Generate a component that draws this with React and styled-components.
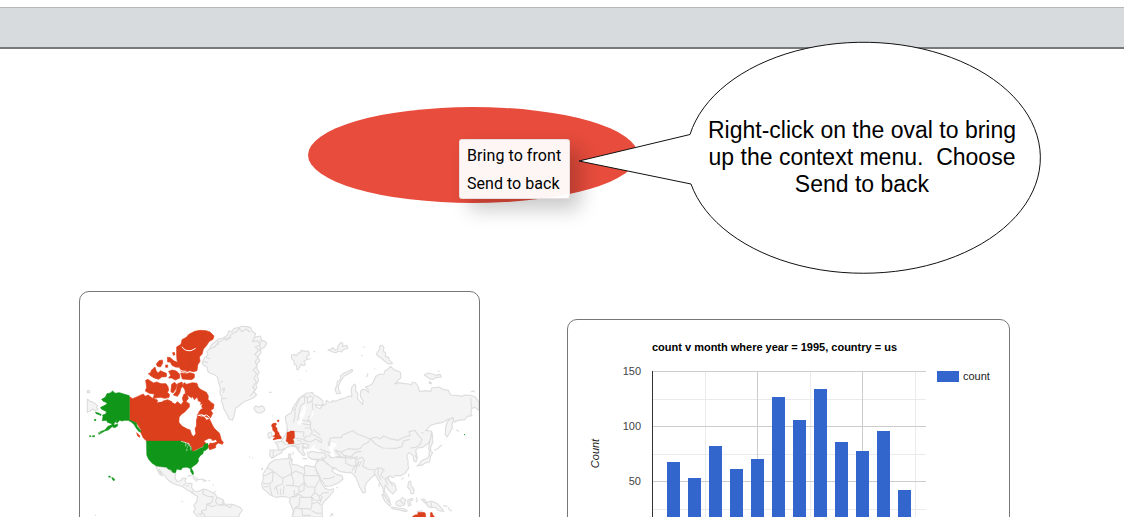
import React from 'react';
import styled, { createGlobalStyle } from 'styled-components';

const GlobalStyle = createGlobalStyle`
  body { margin: 0; background: #fff; overflow: hidden; }
  * { box-sizing: border-box; }
`;

const Page = styled.main`
  position: relative;
  width: 1124px;
  height: 517px;
  overflow: hidden;
  padding-top: 7px;
  font-family: "Liberation Sans", Arial, sans-serif;
`;

const Toolbar = styled.header`
  height: 42px;
  background: #d7dbde;
  border-top: 1px solid #b4b8ba;
  border-bottom: 2px solid #77797b;
`;

const Cards = styled.section`
  display: flex;
  align-items: flex-start;
  gap: 87px;
  padding: 242px 0 0 79px;
`;

const Card = styled.article`
  flex: none;
  width: ${p => p.$width}px;
  height: 320px;
  margin-top: ${p => p.$drop || 0}px;
  border: 1px solid #777;
  border-radius: 10px;
  overflow: hidden;
  background: #fff;
`;

const Drawing = styled.svg`
  display: block;
`;

const Oval = styled.div`
  position: absolute;
  left: 308px;
  top: 107px;
  width: 330px;
  height: 96px;
  border-radius: 50%;
  background: #e74c3c;
`;

const Menu = styled.ul`
  position: absolute;
  left: 459px;
  top: 139px;
  width: 111px;
  height: 60px;
  margin: 0;
  padding: 2px 0 0 7px;
  list-style: none;
  background: rgba(255, 255, 255, 0.95);
  border: 1px solid rgba(225, 215, 215, 0.8);
  border-radius: 3px;
  box-shadow: 10px 10px 20px rgba(0, 0, 0, 0.22);
`;

const MenuItem = styled.li`
  height: 28px;
  font: 16px/28px Roboto, sans-serif;
  letter-spacing: ${p => p.$tracking}px;
  white-space: nowrap;
  color: #000;
`;

const Callout = styled.div`
  position: absolute;
  left: 570px;
  top: 35px;
  width: 480px;
  height: 245px;
`;

const CalloutText = styled.p`
  position: absolute;
  left: 121px;
  top: 82px;
  width: 342px;
  margin: 0;
  font-size: 23px;
  line-height: 27px;
  text-align: center;
  white-space: pre;
  color: #000;
`;

const Land = styled.path`
  fill: ${p => p.$fill || '#f4f4f4'};
  stroke: ${p => p.$edge || '#dddddd'};
  stroke-width: ${p => p.$weight || 3.4};
  stroke-linejoin: round;
`;

const Border = styled.path`
  fill: none;
  stroke: #dddddd;
  stroke-width: 3.4;
  stroke-linejoin: round;
`;

const Water = styled.path`
  fill: #fff;
  stroke: #fff;
  stroke-width: 1;
`;

const Channel = styled.path`
  fill: none;
  stroke: #fff;
  stroke-width: 3;
`;

const RED = '#dc3f1b';
const GREEN = '#109618';

function Americas() {
  return (
    <g>
      <g transform="translate(0 120)">
        {/* Chukotka tip and Greenland */}
        <Land d="M22 222L30 229 38 231 45 236 53 242 49 248 55 253 46 257 38 252 30 258 22 262ZM22 197H29V203H22Z" />
        <Land d="M366 113L374 98 384 90 381 80 389 71 394 60 405 51 416 42 430 39 443 30 445 18 456 20 462 10 476 8 484 4 501 5 512 8 516 19 527 26 523 37 541 33 545 45 560 54 551 65 541 73 543 84 534 95 539 108 529 119 532 134 538 141 532 154 536 166 528 178 530 189 521 201 530 209 520 219 503 226 489 232 480 240 467 249 464 263 461 277 457 286 447 281 438 262 431 251 429 239 424 228 426 216 420 206 421 186 416 175 413 157 404 149 389 144 383 138 382 127 369 119Z" />
        <Border d="M390 72L405 65 412 55 422 49 430 43 445 39 455 27 470 20 478 10 486 20 499 12 510 21M397 67L408 64M413 48L415 60M431 38L438 46 455 36M524 37L517 50 532 47 541 60 525 66 537 75 524 88 535 98 525 110 532 122 519 136 530 145 522 160 529 171 518 186 526 195 510 214M370 110L384 112M378 97L390 102M421 173L429 168M424 195L434 189 430 204M427 222L439 219" />
      </g>
      <Land d="M522 369L527 362 535 367 545 362 552 367 554 376 546 383 534 384 526 378Z" />
      {/* Mexico, Caribbean and South America */}
      <Land d="M226 541L242 545 261 548 272 559 282 561 287 566 285 580 292 590 303 586 308 579 319 580 314 588 319 594 336 596 335 607 342 618 358 619 371 612 380 614 404 626 411 636 430 645 433 657 458 658 480 667 487 675 479 687 475 696 353 696 340 681 346 671 341 662 350 650 353 634 341 628 334 621 322 616 308 605 292 600 278 595 264 585 252 570 237 553 239 560 247 572 238 567Z" />
      <Border d="M317 596L309 602M319 604L326 600M341 619L334 625M371 615L368 627 383 634 399 635 397 650 388 658M411 636L406 650 416 660 431 657M430 645L428 657M458 659L449 668 438 660 418 661M397 652L380 658 379 674 364 678 365 688 353 687M380 658L396 665 410 660M364 678L378 696" />
      <Border d="M323 574L333 571 343 575 355 584 346 585 338 578M356 584L367 582 379 588 367 588M386 587H390M398 600H402M400 623L407 619M347 589H351M305 649H309M45 691H48M507 515L511 517 M517 518L519 520M544 537H546M544 553L549 554" />

      <g transform="translate(0 120)">
        {/* Canada mainland */}
        <Land $fill={RED} $edge={RED} $weight={2} d="M149 216L158 221 172 215 185 209 190 207 195 214 205 210 215 218 232 225 233 231 247 229 263 224 279 232 285 238 292 230 303 239 310 230 307 220 312 207 320 207 325 220 318 230 328 236 328 246 312 263 300 277 298 293 307 303 318 307 329 312 335 329 342 335 344 320 342 309 348 300 347 287 352 278 352 267 364 271 374 278 380 286 388 281 396 298 402 309 412 319 418 324 421 334 424 345 430 352 427 358 415 354 407 360 407 368 389 374 384 363 391 354 397 343 387 340 371 348 378 355 370 363 354 371 337 380 334 369 328 354 315 351 302 348 200 348 190 339 182 322 183 314 170 294 149 286Z" />
        {/* Baffin island */}
        <Land $fill={RED} $edge={RED} $weight={2} d="M312 173L320 178 337 173 351 175 354 186 360 192 371 198 379 202 385 213 384 223 394 233 402 238 400 251 392 256 398 265 391 279 377 275 367 267 355 266 359 256 370 250 363 246 369 236 354 239 345 244 342 228 337 220 323 211 316 205 315 195 308 184Z" />
        {/* Arctic archipelago */}
        <Land $fill={RED} $edge={RED} $weight={2} d="M197 166L204 163 211 168 221 174 230 171 243 176 258 176 264 185 266 195 262 203 269 208 267 217 255 220 241 217 220 220 223 207 208 205 196 198 200 187ZM290 66L303 58 306 44 319 37 327 28 344 19 360 16 378 17 390 21 402 33 399 43 388 49 380 61 370 73 366 88 358 96 360 109 353 120 351 137 340 140 329 137 316 142 303 139 299 128 295 120 291 105 290 92ZM302 144L319 146 330 143 343 147 343 158 335 164 307 162ZM205 146L212 143 214 136 225 126 229 139 235 144 241 137 259 145 259 154 245 156 236 163 222 159 213 153ZM229 117L237 107 247 105 248 115 241 126 232 124ZM262 97L271 98 281 107 292 112 297 127 286 126 276 121 271 111 263 111ZM278 83L283 82 285 89 280 91ZM266 139L277 135 289 138 299 148 299 159 286 165 275 159 266 159 272 151ZM275 178L284 172 291 180 287 193 279 204 272 200ZM293 176L306 171 309 183 303 190 299 204 292 214 280 210 289 198ZM257 120H263V127H257ZM249 146H258V155H249ZM170 323L179 332 179 337 173 333Z" />
        <Water d="M337 216L343 226 351 218 354 229 362 232 359 240 365 246 358 257 344 261 348 277 333 279 325 271 334 261 332 244 339 240 333 230Z" />
        <Water d="M299 276L306 268 313 264 325 270 335 280 348 280 348 302 344 311 346 327 340 332 337 314 323 311 307 302 298 291Z" />
        <Water d="M384 350L391 345 399 348 407 345 410 350 396 354 390 352Z" />
        <Channel d="M306 65Q313 79 333 77L347 70M297 132L306 138 319 139M269 171L270 208M302 207L303 230M232 231L248 228M276 230L284 234M213 158L235 167 260 162M352 270L365 273 380 270 390 278" strokeWidth="2.5" />
        <path d="M322 29L334 34 342 27 352 35M372 24L366 40 374 48 365 60 370 71 361 85M327 92L335 98 329 109 341 116 331 127M336 178L348 191 357 185M206 188L221 190 232 187M184 220L193 228 202 220M234 236L245 232 255 238M362 251L376 256M375 240L387 246M377 302L393 318M401 332L409 338M346 329L354 336 366 335M340 366L352 360M170 300L183 314 190 331" fill="none" stroke="#b64523" strokeWidth="1.4" opacity=".65" />

        {/* Alaska, contiguous states, Hawaii */}
        <Land $fill={GREEN} $edge={GREEN} $weight={2} d="M65 223L76 217 81 206 91 204 98 198 105 205 118 203 134 208 148 212 148 285 158 289 169 294 171 304 180 314 183 321 176 319 167 307 163 299 154 291 145 286 134 286 125 288 119 285 114 292 108 293 111 285 103 294 99 302 86 314 74 318 62 325 61 320 75 315 84 304 95 300 96 296 82 292 80 286 67 287 69 275 68 270 77 267 80 260 64 252 62 247 69 244 80 238 81 233 70 229Z" />
        <Land $fill={GREEN} $edge={GREEN} $weight={1} d="M46 261L59 265 57 269 48 266ZM43 283H48V287H43ZM28 332H33V335H28ZM36 333L44 331 44 335 38 336ZM55 323L62 323 57 329ZM98 299L106 299 113 296 113 303 105 308 98 307ZM60 266L64 268 62 272 57 269ZM86 453H91V457H86ZM95 457L100 459 105 464 101 468 96 461Z" />
        <Land $fill={GREEN} $edge={GREEN} $weight={1} d="M199 348H303L317 353 327 359 334 366 336 379 345 378 360 370 369 366 374 356 384 355 384 370 378 376 371 378 369 386 361 392 355 401 356 408 350 417 340 424 334 429 340 440 341 448 338 449 332 440 331 431 321 427 308 428 303 435 290 433 287 443 279 443 273 435 264 432 260 427 245 425 229 423 216 415 205 402 200 390Z" />
        <path d="M303 349L318 353 317 364M323 359L333 365 332 376M322 364L320 378" fill="none" stroke="#fff" strokeWidth="1.8" />
        <path d="M318 368L325 371" stroke={GREEN} strokeWidth="3" />
      </g>
    </g>
  );
}

function OldWorld() {
  return (
    <g transform="translate(540 240)">
      {/* Arctic islands */}
      <Land d="M0-72L11-73 20-66 14-54 5-49 0-42ZM94-30L103-32 108-27 114-35 122-39 124-44 134-41 145-42 148-31 139-24 142-17 132-11 136 0 129 2 123-3 119 6 114 15 110 13 110 2 103-2 102-12 95-19ZM204-45L212-47 219-52 224-45 233-48 235-59 243-68 248-65 248-56 260-59 264-51 250-46 245-39 235-42 228-37 221-38ZM349-33L358-46 360-58 366-59 372-52 370-42 377-35 376-26 386-23 388-14 398-5 394-3 382-5 370-15 363-22 354-26ZM493 30L504 24 518 27 528 31 540 28 544 36 527 38 520 43 508 41ZM509 49L515 56 508 55Z" />
      <Border d="M142-17L151-19M160-40H166M310-54H316M303-29L307-27M321 26L324 28 319 37M344 10V13M137 18H141M119 45H122M27 82H35M534 16L538 20M632 81L641 77 642 82M36 153H39" />
      <Land d="M230 86L225 73 230 63 232 50 241 43 242 33 253 24 266 18 276 13 278 18 266 26 253 33 243 47 235 63 236 75 242 85Z" />

      {/* Eurasia */}
      <Land d="M78 172L76 156 83 149 94 143 98 130 107 116 116 101 128 92 141 84 150 84 157 82 162 90 177 97 188 107 190 117 180 122 165 118 170 127 180 131 187 122 198 117 199 106 206 111 215 112 217 107 227 109 240 103 255 99 268 93 276 95 274 79 275 67 283 57 287 61 287 77 294 87 292 100 299 108 308 118 309 107 301 94 302 79 307 73 316 74 326 83 323 71 316 66 328 62 337 56 348 34 358 28 372 27 374 18 382 14 392 4 402 14 421 21 423 38 414 47 404 57 418 53 428 55 446 57 453 60 458 51 467 54 475 66 479 80 494 77 513 79 515 69 536 66 551 74 565 76 572 90 594 92 607 94 612 90 632 91 646 96 657 112 657 137 645 127 634 131 633 147 636 152 622 154 614 164 594 166 584 172 577 160 564 163 549 172 527 176 512 181 497 197 514 198 513 218 505 235 488 247 473 249 467 258 472 277 468 291 461 287 460 274 451 265 446 263 440 273 444 285 444 300 446 309 435 325 422 332 405 332 399 338 391 333 382 337 389 349 404 356 409 375 399 387 384 373 376 359 373 379 386 399 390 410 380 404 371 388 369 370 357 348 346 329 335 337 320 353 315 364 316 382 309 384 299 366 288 338 283 331 272 322 261 323 241 320 221 307 215 317 229 328 246 332 249 342 237 353 212 363 198 364 184 345 169 316 164 305 173 285 156 283 145 276 142 261 151 257 140 252 129 244 129 259 136 269 129 271 114 256 105 241 96 242 83 247 69 253 65 263 52 270 36 280 29 272 30 255 56 255 51 239 45 232 63 229 75 211 81 201 81 177Z" />
      <Land d="M556 208L557 186 562 170 577 157 581 163 576 178 577 189 567 207 561 216ZM516 202L518 213 517 221 519 231 512 245 512 257 506 253 508 235 512 219ZM483 289L490 284 503 279 508 271 507 261 511 257 518 263 512 273 510 284 509 291 496 294 486 301 476 301Z" />
      <Border d="M523 256L533 251 545 240M588 195L597 199M469 304L480 299M476 297V304" />
      {/* Scandinavian, Baltic and Central European borders */}
      <Border d="M96 132L105 134 105 151 101 172M105 134L112 115 121 98 133 93 142 98 151 92 160 99 156 108 159 133 151 153 143 157M133 93L134 113 121 123 117 147 112 166M142 98L143 115 156 107M126 165L148 170M127 176L151 180M134 189H151M143 160L152 173 151 189 157 201 149 213 136 214 132 226 151 231 168 222 184 233 185 223 167 213 157 207M132 200L130 216M105 199L132 201M105 219L133 223M83 190V214M63 228L79 239M57 256L77 253M40 255L39 279M81 240L98 232 112 239 130 234 147 240 142 250M97 244L117 246 113 255M130 235L127 248 147 250M110 224L126 230M146 262L158 259 173 263 194 264 199 277 183 284 158 282M180 252L199 260 210 264M160 193L181 211" />
      <Land d="M24 205L34 201 36 214 28 220 24 216ZM86 268H92V279H86Z" />
      <Water d="M208 232L224 234 231 241 219 249 221 266 228 272 222 279 211 271 214 261 207 250ZM140 251L152 252 160 242 166 240 160 250 169 251 180 260 156 257 143 260ZM113 173L123 161 119 149 127 137 132 122 137 124 135 145 128 159 122 176 113 181ZM155 142L158 135 159 151 151 158Z" />
      {/* Asian borders */}
      <Border d="M209 244L210 220 224 217 244 218 248 210 278 197 291 206 310 214 330 222 327 230 310 239 300 251 287 253 265 251 242 262 226 255M332 221L349 216 360 222 371 213 389 221 415 226 433 216 451 212 447 200 465 196 473 208 486 223 479 240 468 247 450 249M332 222L347 238 369 249 407 250 426 245 430 228 449 223M225 256L245 278 268 279 286 262 304 259M241 261L252 271 278 276 290 284 306 276 313 286 308 304 324 312 343 315 354 309 366 310 374 317M229 277L257 276 273 281 294 275M257 278L257 295 275 303 292 302 297 288M202 268L214 279 240 273M185 276L202 299M169 294L180 283 195 290 224 314M189 341L210 340 224 334M288 280L287 301 276 317M295 289L289 309 285 325M305 289L296 305M345 316L342 330M355 311L354 328 363 345M370 314L362 332 376 343 384 360M376 342L387 335M382 336L398 363M206 242L205 229" />
      <Border d="M632 99L636 134M465 269L470 279M357 354L358 366M446 326V335M425 344L431 338M550 422L562 424M565 427L568 434 576 438M229 368H234M4 310H9M93 284L99 284M211 456L216 445 220 452M99 260V270M89 265L91 272M127 281H141M485 203H490" />
      <Land d="M365 388L373 391 386 410 393 418 389 423 374 408ZM393 426L414 429 430 431 442 437 437 440 416 435 397 431ZM408 412L418 406 428 398 437 405 433 420 420 424 408 419ZM446 350L452 348 453 361 462 374 461 385 453 386 450 374 443 367ZM443 405L456 400 459 404 449 409 453 420 445 423ZM484 403L493 402 500 413 513 408 531 415 546 431 551 439 535 436 526 427 508 427 496 414Z" />
      <Border d="M420 406L430 417M514 412L514 427M469 398L472 407 468 411M470 440L487 437" />

      {/* Africa */}
      <Land d="M21 308L29 295 44 285 65 282 85 281 95 281 96 298 112 300 130 309 136 301 153 304 166 306 170 321 178 339 186 357 196 371 210 375 220 371 221 378 208 394 194 408 186 422 187 456H96L100 438 93 420 88 410 91 400 80 396 66 394 48 397 32 391 20 380 8 370 5 357 10 343 9 328Z" />
      <Border d="M21 308L36 316 40 319 20 330 11 333M37 317L68 340 94 327 94 312 88 296 91 284M40 320L37 350 27 357 9 355M68 340L68 357 50 363 42 373M94 327L101 349 98 362 78 361M95 326L107 318 130 328 133 353 116 366 99 361M134 330L133 306M132 332H172M133 352L142 366 166 366 174 352 182 338M133 353L132 376 118 382 105 390 98 400M165 366L164 382 178 394 188 384 206 382M116 366L118 381M103 375L103 390M92 395L106 395 116 388 130 396 151 397 165 382M119 396L118 421 104 430 99 450M118 397H155L156 418 152 434 137 430 118 432M155 417L172 411 183 420M155 438L170 445 187 444M157 397L161 405 183 406 187 393M178 394L182 412M48 363L54 388M72 362L70 389M31 369L36 391M30 359L30 372M10 366L25 364M62 371L62 389M104 429L125 430 128 451 152 451" />
      {/* United Kingdom, Germany, northern Australia */}
      <Land $fill={RED} $edge={RED} $weight={1} d="M36 178L39 175 48 174 50 178 46 183 51 190 52 197 57 203 59 211 64 215 64 221 53 222 40 225 39 222 46 216 38 214 45 210 45 203 38 195 37 187 34 183ZM52 165H57V170H52ZM81 202L90 200 90 198 103 198 104 216 102 221 98 222 102 229 101 236 86 237 84 232 78 229 80 217ZM458 454L466 449 472 449 474 442 493 442 497 446V456H458ZM511 443L516 442 519 450 524 456H511Z" />
      <path d="M612 209h3" stroke="#109618" strokeWidth="3" />
    </g>
  );
}

function WorldMap() {
  return (
    <Drawing width="399" height="225" viewBox="0 21 1197 675">
      <Americas />
      <OldWorld />
    </Drawing>
  );
}

const barTops = [462, 478, 446, 469, 459, 397, 420, 389, 442, 451, 431, 490];

function CountChart() {
  return (
    <Drawing width="441" height="197" viewBox="568 320 441 197" shapeRendering="crispEdges" fontSize="11">
      {[705, 810, 915].map(x => <path key={x} d={`M${x}.5 371V517`} stroke="#ebebeb" />)}
      {[399, 454, 509].map(y => <path key={y} d={`M652 ${y}.5H926`} stroke="#ebebeb" />)}
      {[757, 862].map(x => <path key={x} d={`M${x}.5 371V517`} stroke="#ccc" />)}
      {[371, 426, 481].map(y => <path key={y} d={`M652 ${y}.5H926`} stroke="#ccc" />)}
      {barTops.map((y, i) => <rect key={i} x={667 + i * 21} y={y} width="13" height={517 - y} fill="#3366cc" />)}
      <path d="M652.5 371V517" stroke="#333" />
      <text x="652" y="351" fontWeight="bold" textLength="245">count v month where year = 1995, country = us</text>
      {[150, 100, 50].map((n, i) => <text key={n} x="641" y={375 + i * 55} textAnchor="end" fill="#444">{n}</text>)}
      <text transform="translate(599 453.5) rotate(-90)" textAnchor="middle" fontStyle="italic" fill="#222">Count</text>
      <rect x="937" y="371" width="22" height="11" fill="#3366cc" />
      <text x="963" y="380" fill="#222">count</text>
    </Drawing>
  );
}

export default function App() {
  return (
    <Page>
      <GlobalStyle />
      <Toolbar />
      <Cards>
        <Card $width={401}><WorldMap /></Card>
        <Card $width={443} $drop={28}><CountChart /></Card>
      </Cards>
      <Oval />
      <Menu>
        <MenuItem $tracking={0.07}>Bring to front</MenuItem>
        <MenuItem $tracking={0.03}>Send to back</MenuItem>
      </Menu>
      <Callout>
        <Drawing width="480" height="245" viewBox="570 35 480 245">
          <path d="M690 134.5A177 115.5 0 1 1 691 184L579 161Z" fill="#fff" stroke="#111" />
        </Drawing>
        <CalloutText>{'Right-click on the oval to bring\nup the context menu.  Choose\nSend to back'}</CalloutText>
      </Callout>
    </Page>
  );
}
